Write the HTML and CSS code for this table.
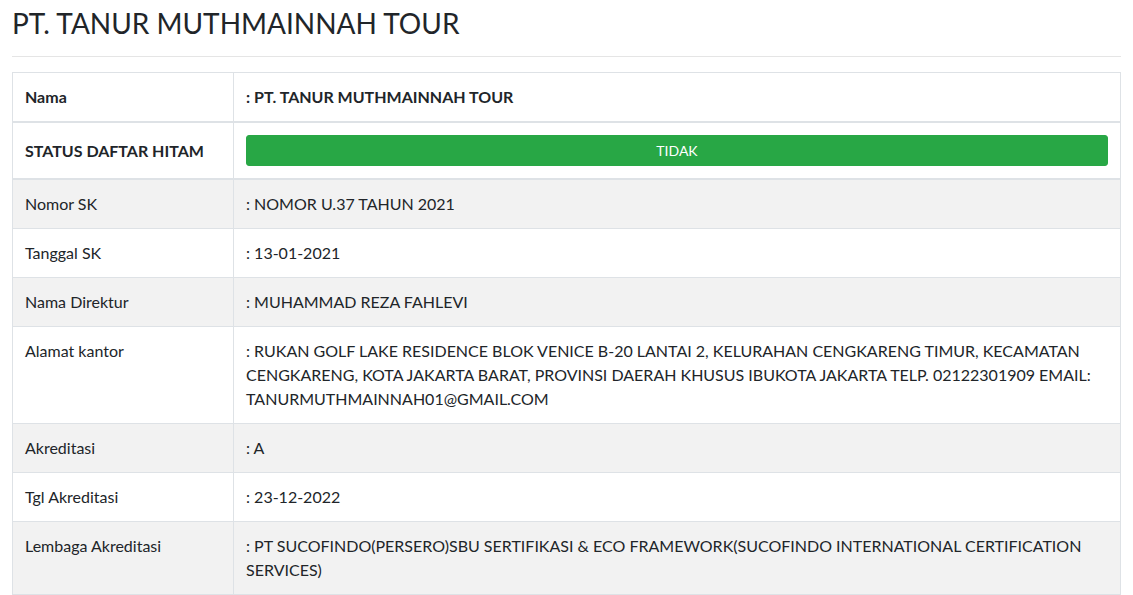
FILE: index.html
```html
<!DOCTYPE html>
<html lang="en">
<head>
    <meta charset="UTF-8">
    <meta name="viewport" content="width=device-width, initial-scale=1.0">
    <title>PT. TANUR MUTHMAINNAH TOUR</title>
    <link rel="stylesheet" href="styles.css">
</head>
<body>
    <div class="page">
        <h2 class="page-title">PT. TANUR MUTHMAINNAH TOUR</h2>
        <hr class="divider">
        <table class="detail-table">
            <thead>
                <tr>
                    <th class="label-col">Nama</th>
                    <th>: PT. TANUR MUTHMAINNAH TOUR</th>
                </tr>
                <tr>
                    <th class="label-col">STATUS DAFTAR HITAM</th>
                    <th><button class="btn-status">TIDAK</button></th>
                </tr>
            </thead>
            <tbody>
                <tr>
                    <td>Nomor SK</td>
                    <td>: NOMOR U.37 TAHUN 2021</td>
                </tr>
                <tr>
                    <td>Tanggal SK</td>
                    <td>: 13-01-2021</td>
                </tr>
                <tr>
                    <td>Nama Direktur</td>
                    <td>: MUHAMMAD REZA FAHLEVI</td>
                </tr>
                <tr>
                    <td>Alamat kantor</td>
                    <td>: RUKAN GOLF LAKE RESIDENCE BLOK VENICE B-20 LANTAI 2, KELURAHAN CENGKARENG TIMUR, KECAMATAN CENGKARENG, KOTA JAKARTA BARAT, PROVINSI DAERAH KHUSUS IBUKOTA JAKARTA TELP. 02122301909 EMAIL: TANURMUTHMAINNAH01@GMAIL.COM</td>
                </tr>
                <tr>
                    <td>Akreditasi</td>
                    <td>: A</td>
                </tr>
                <tr>
                    <td>Tgl Akreditasi</td>
                    <td>: 23-12-2022</td>
                </tr>
                <tr>
                    <td>Lembaga Akreditasi</td>
                    <td>: PT SUCOFINDO(PERSERO)SBU SERTIFIKASI &amp; ECO FRAMEWORK(SUCOFINDO INTERNATIONAL CERTIFICATION SERVICES)</td>
                </tr>
            </tbody>
        </table>
    </div>
</body>
</html>
```

FILE: styles.css
```css
body {
    margin: 0;
    font-family: 'Lato', 'Open Sans', sans-serif;
    font-size: 16px;
    line-height: 1.5;
    color: #212529;
    background-color: #fff;
}
.page {
    padding: 0 12px;
}
.page-title {
    margin: 5px 0 0;
    font-size: 28px;
    font-weight: 400;
    line-height: 36px;
    color: #212529;
}
.divider {
    margin: 15px 0 15px;
    border: 0;
    border-top: 1px solid rgba(0, 0, 0, 0.1);
}
.detail-table {
    width: 100%;
    border-collapse: collapse;
    border: 1px solid #dee2e6;
}
.detail-table th,
.detail-table td {
    padding: 12px;
    text-align: left;
    vertical-align: top;
    border: 1px solid #dee2e6;
}
.detail-table thead th {
    font-weight: 700;
    border-bottom: 2px solid #dee2e6;
}
.detail-table .label-col,
.detail-table td:first-child {
    width: 196px;
}
.detail-table thead tr:nth-child(2) th:first-child {
    vertical-align: middle;
}
.detail-table tbody tr:nth-child(odd) {
    background-color: #f2f2f2;
}
.btn-status {
    display: block;
    width: 100%;
    padding: 4px 8px;
    font-family: inherit;
    font-size: 14px;
    line-height: 1.5;
    color: #fff;
    background-color: #28a745;
    border: 1px solid #28a745;
    border-radius: 3px;
    cursor: pointer;
}
```
